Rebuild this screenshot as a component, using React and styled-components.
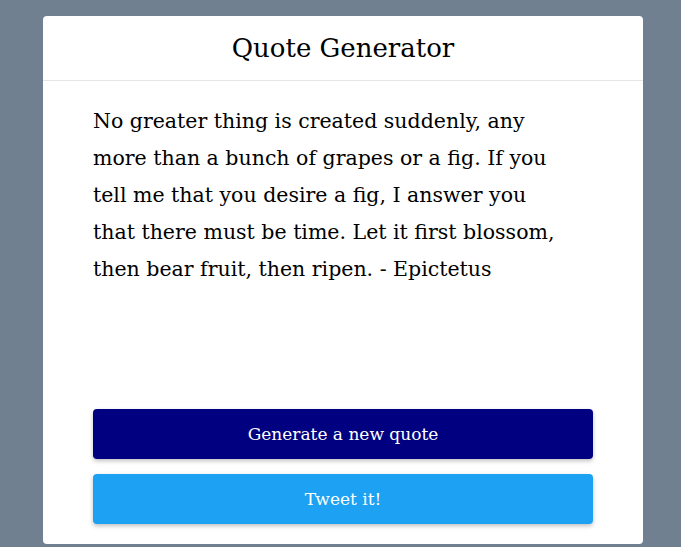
import React from 'react';
import styled, { createGlobalStyle } from 'styled-components';

const GlobalStyle = createGlobalStyle`
  html, body {
    margin: 0;
    padding: 0;
    background-color: #708090;
    font-family: "DejaVu Serif", Georgia, serif;
  }
`;

const Page = styled.div`
  padding: 16px 0 3px 5px;
  display: flex;
  justify-content: center;
`;

const Card = styled.div`
  width: 600px;
  height: 528px;
  background: #fff;
  border-radius: 4px;
  display: flex;
  flex-direction: column;
`;

const Header = styled.div`
  height: 64px;
  border-bottom: 1px solid #e6e6e6;
  display: flex;
  align-items: center;
  justify-content: center;
`;

const Title = styled.h1`
  margin: 0;
  font-size: 26px;
  font-weight: normal;
  color: #000;
`;

const Body = styled.div`
  flex: 1;
  padding: 22px 50px 20px;
  display: flex;
  flex-direction: column;
`;

const QuoteText = styled.p`
  margin: 0;
  max-width: 470px;
  font-size: 20.5px;
  line-height: 37px;
  color: #000;
`;

const Buttons = styled.div`
  margin-top: auto;
  display: flex;
  flex-direction: column;
  gap: 15px;
`;

const Button = styled.button`
  height: 50px;
  border: none;
  border-radius: 4px;
  background: ${p => p.$bg};
  color: #fff;
  font-family: inherit;
  font-size: 17px;
  font-weight: 500;
  box-shadow: 0 2px 4px rgba(0, 0, 0, 0.25);
  cursor: pointer;
`;

export default function App() {
  return (
    <>
      <GlobalStyle />
      <Page>
        <Card>
          <Header>
            <Title>Quote Generator</Title>
          </Header>
          <Body>
            <QuoteText>
              No greater thing is created suddenly, any more than a bunch of grapes or a fig. If you tell me that you desire a fig, I answer you that there must be time. Let it first blossom, then bear fruit, then ripen. - Epictetus
            </QuoteText>
            <Buttons>
              <Button $bg="#000080">Generate a new quote</Button>
              <Button $bg="#1da1f2">Tweet it!</Button>
            </Buttons>
          </Body>
        </Card>
      </Page>
    </>
  );
}
